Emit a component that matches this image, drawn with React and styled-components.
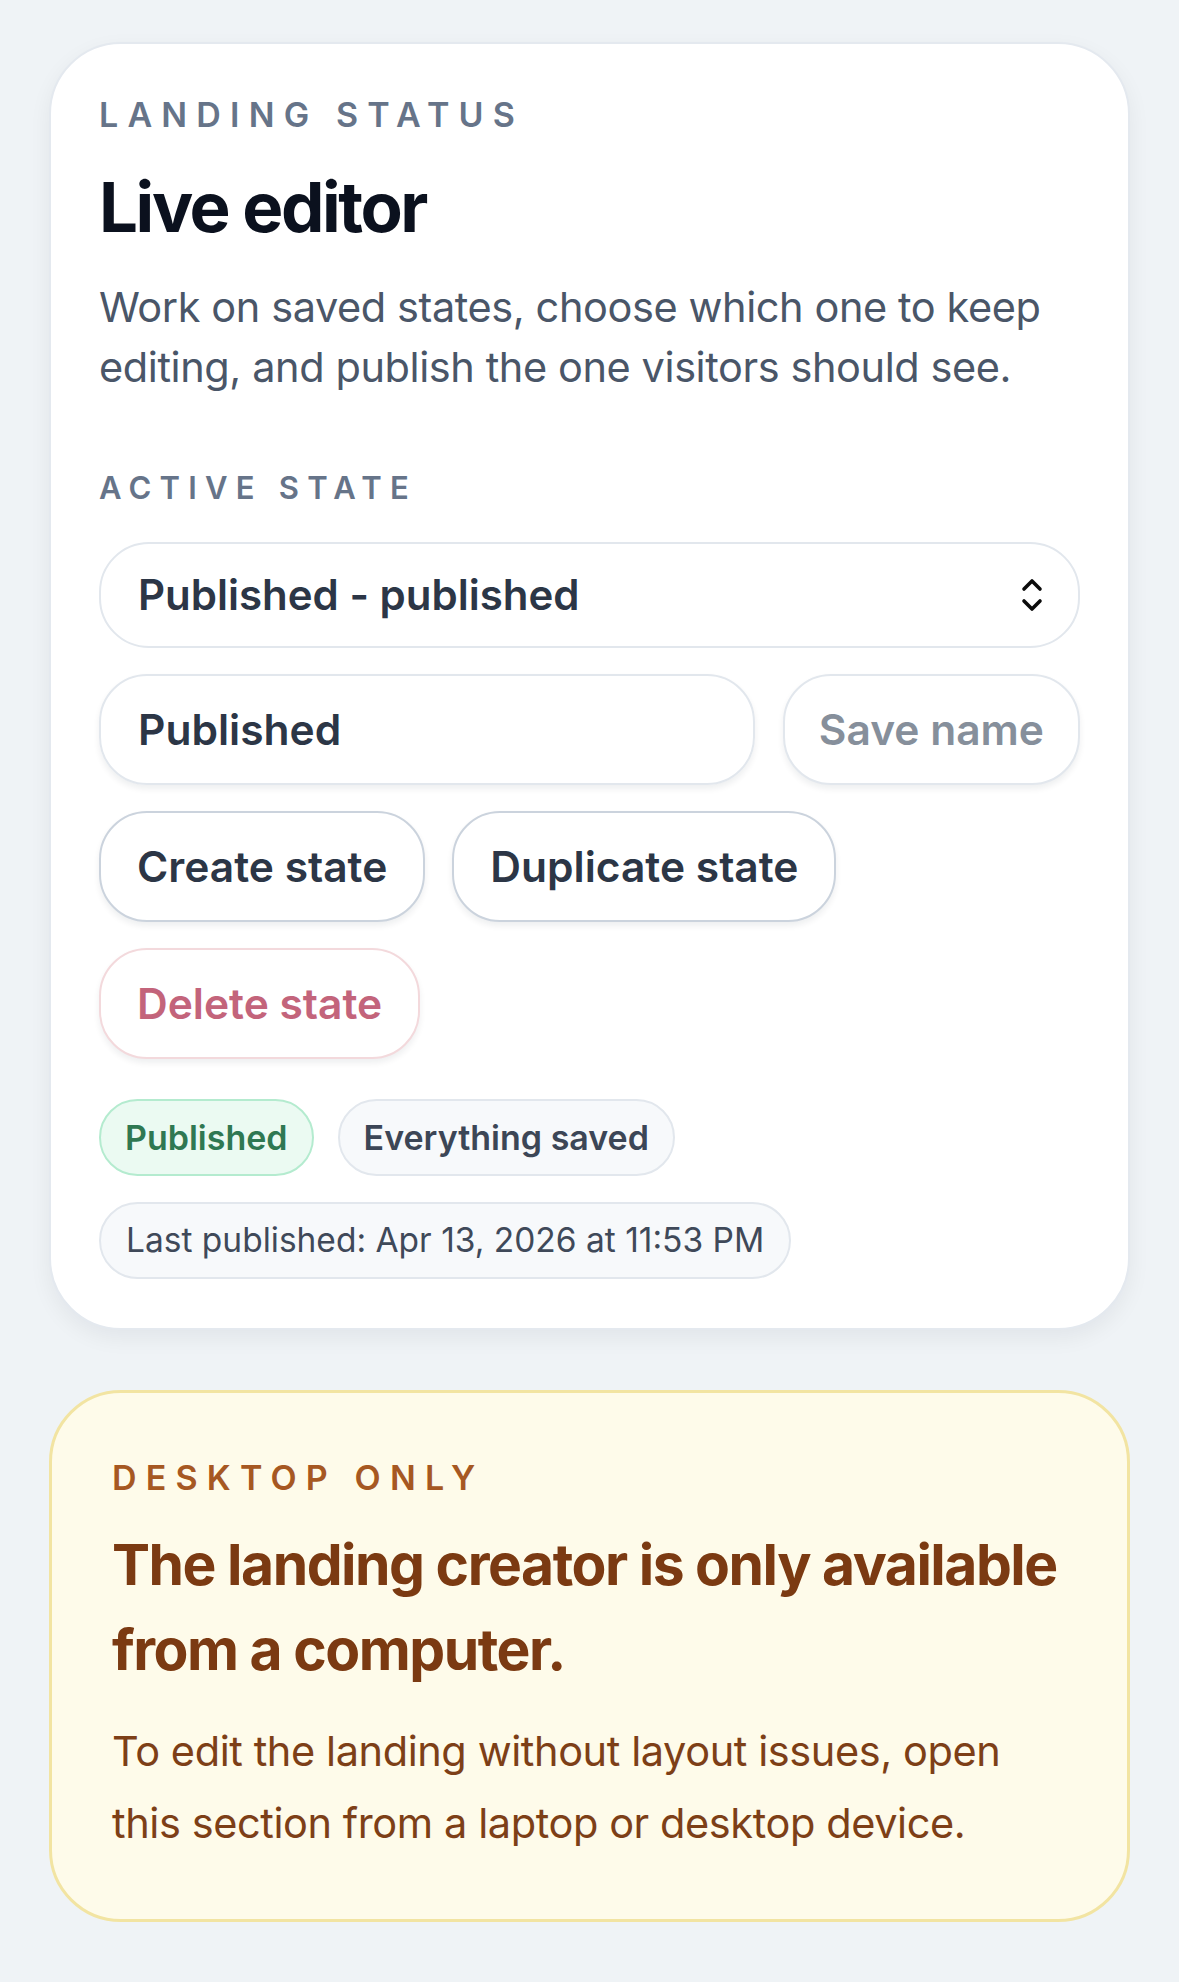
import React from "react"
import styled, { createGlobalStyle } from "styled-components"

const GlobalStyle = createGlobalStyle`
  html, body {
    margin: 0;
    padding: 0;
    background: #eff3f6;
  }
  body {
    font-family: Inter, "Noto Sans", "Liberation Sans", sans-serif;
    -webkit-font-smoothing: antialiased;
  }
  * {
    box-sizing: border-box;
  }
`

const Page = styled.div`
  display: flex;
  flex-direction: column;
  gap: 60px;
  padding: 42px 49px 60px;
`

const Card = styled.section`
  background: #ffffff;
  border: 2px solid #e4e9ef;
  border-radius: 72px;
  padding: 51px 48px 49px;
  box-shadow: 0 8px 22px rgba(15, 23, 42, 0.06);
`

const Eyebrow = styled.div`
  font-size: ${(p) => p.size || 34}px;
  line-height: 1.2;
  font-weight: 600;
  letter-spacing: ${(p) => p.spacing || 0.27}em;
  text-transform: uppercase;
  color: ${(p) => p.color || "#667489"};
`

const Title = styled.h1`
  margin: 30px 0 0;
  font-size: 69px;
  line-height: 1.2;
  font-weight: 700;
  letter-spacing: -0.035em;
  color: #0b111e;
`

const Lead = styled.p`
  margin: 28px 0 0;
  font-size: 41.5px;
  line-height: 60px;
  font-weight: 400;
  letter-spacing: -0.01em;
  color: #4a5668;
`

const Section = styled.div`
  margin-top: 72px;
  display: flex;
  flex-direction: column;
  gap: 26px;
`

const Select = styled.div`
  margin-top: 10px;
  height: 106px;
  border: 2px solid #e2e7ed;
  border-radius: 50px;
  display: flex;
  align-items: center;
  justify-content: space-between;
  padding: 0 34px 0 37px;
  font-size: 42px;
  font-weight: 600;
  color: #2c3646;
  background: #fff;
`

const Row = styled.div`
  display: flex;
  flex-wrap: wrap;
  gap: ${(p) => p.gap || 28}px;
  margin-top: ${(p) => p.top || 0}px;
`

const Field = styled.div`
  flex: 1;
  height: 111px;
  border: 2px solid #e2e7ed;
  border-radius: 48px;
  display: flex;
  align-items: center;
  padding: 0 37px;
  font-size: 42.5px;
  font-weight: 600;
  color: #2c3646;
  box-shadow: 0 4px 6px rgba(15, 23, 42, 0.07);
`

const tones = {
  plain: { border: "#cbd3dd", color: "#2c3646", pad: 36 },
  muted: { border: "#e2e7ed", color: "#868f9b", pad: 34 },
  danger: { border: "#f3d9dc", color: "#c3647b", pad: 36 },
}

const Button = styled.button`
  height: 111px;
  padding: 0 ${(p) => tones[p.tone || "plain"].pad}px;
  border-radius: 48px;
  background: #fff;
  border: 2px solid ${(p) => tones[p.tone || "plain"].border};
  color: ${(p) => tones[p.tone || "plain"].color};
  font-family: inherit;
  font-size: 42.5px;
  font-weight: 600;
  box-shadow: 0 4px 6px rgba(15, 23, 42, 0.07);
  cursor: pointer;
`

const pills = {
  success: { bg: "#ebfaf2", border: "#b4ebcf", color: "#2f7852", weight: 600 },
  neutral: { bg: "#f7f9fb", border: "#e2e7ed", color: "#3c4656", weight: 600 },
  info: { bg: "#f7f9fb", border: "#e2e7ed", color: "#3f4959", weight: 400 },
}

const Pill = styled.span`
  display: inline-flex;
  align-items: center;
  height: 77px;
  padding: 0 ${(p) => (p.kind === "info" ? 25 : 24)}px;
  border-radius: 40px;
  border: 2px solid ${(p) => pills[p.kind].border};
  background: ${(p) => pills[p.kind].bg};
  color: ${(p) => pills[p.kind].color};
  font-size: ${(p) => (p.kind === "info" ? 33.5 : 34)}px;
  font-weight: ${(p) => pills[p.kind].weight};
`

const Notice = styled.section`
  background: #fefbea;
  border: 3px solid #f2e4a2;
  border-radius: 72px;
  padding: 65px 60px 60px;
`

const NoticeTitle = styled.h2`
  margin: 23px 0 0;
  font-size: 57px;
  line-height: 85px;
  font-weight: 700;
  letter-spacing: -0.026em;
  color: #7b3a12;
`

const NoticeText = styled.p`
  margin: 23px 0 0;
  font-size: 41.5px;
  line-height: 72px;
  font-weight: 400;
  letter-spacing: -0.01em;
  color: #7d3f17;
`

function UpDown() {
  return (
    <svg width="24" height="36" viewBox="0 0 24 36" fill="none">
      <path d="M4 12 L12 4 L20 12" stroke="#0b0b0b" strokeWidth="3.6" strokeLinecap="round" strokeLinejoin="round" />
      <path d="M4 24 L12 32 L20 24" stroke="#0b0b0b" strokeWidth="3.6" strokeLinecap="round" strokeLinejoin="round" />
    </svg>
  )
}

export default function App() {
  return (
    <>
      <GlobalStyle />
      <Page>
        <Card>
          <Eyebrow>Landing status</Eyebrow>
          <Title>Live editor</Title>
          <Lead>
            Work on saved states, choose which one to keep editing, and publish the one visitors should see.
          </Lead>
          <Section>
            <Eyebrow size={31} spacing={0.265}>Active state</Eyebrow>
            <Select>
              <span>Published - published</span>
              <UpDown />
            </Select>
            <Row>
              <Field>Published</Field>
              <Button tone="muted">Save name</Button>
            </Row>
            <Row gap={27}>
              <Button>Create state</Button>
              <Button>Duplicate state</Button>
            </Row>
            <Row>
              <Button tone="danger">Delete state</Button>
            </Row>
            <Row gap={24} top={14}>
              <Pill kind="success">Published</Pill>
              <Pill kind="neutral">Everything saved</Pill>
            </Row>
            <Row>
              <Pill kind="info">Last published: Apr 13, 2026 at 11:53 PM</Pill>
            </Row>
          </Section>
        </Card>
        <Notice>
          <Eyebrow color="#a65822">Desktop only</Eyebrow>
          <NoticeTitle>The landing creator is only available from a computer.</NoticeTitle>
          <NoticeText>
            To edit the landing without layout issues, open this section from a laptop or desktop device.
          </NoticeText>
        </Notice>
      </Page>
    </>
  )
}
